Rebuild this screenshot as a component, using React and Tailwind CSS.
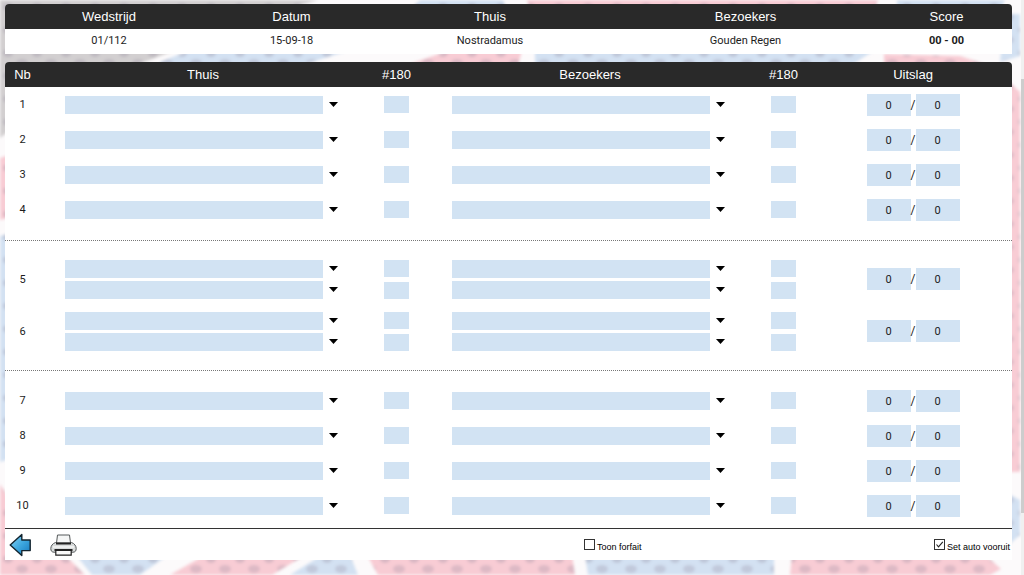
import React, { useState } from "react";

const GRAY = "#d2cfd0";
const PINK = "#f8ccd4";
const BLUE = "#d3e1f2";

const PATCHES = [
  { fill: GRAY, d: "M0 0H318L268 14L150 60L60 92L0 138Z" },
  { fill: PINK, d: "M0 158L40 145V210L0 220Z" },
  { fill: BLUE, d: "M0 236L40 226V450L0 462Z" },
  { fill: PINK, d: "M0 484L10 500L85 575H0Z" },
  { fill: BLUE, d: "M160 62L190 50H350L300 66H160Z" },
  { fill: BLUE, d: "M420 0H503L507 10H410Z" },
  { fill: PINK, d: "M410 64L450 50H522L518 66Z" },
  { fill: PINK, d: "M527 0H878L874 10H530Z" },
  { fill: BLUE, d: "M535 50H875L850 66H535Z" },
  { fill: BLUE, d: "M897 0H1005L1000 10H897Z" },
  { fill: PINK, d: "M884 54L960 56L990 66H884Z" },
  { fill: BLUE, d: "M1005 14H1020V56L1000 62Z" },
  { fill: PINK, d: "M1005 78L1020 92V472H1005Z" },
  { fill: BLUE, d: "M1005 492L1020 500V535L1005 548Z" },
  { fill: BLUE, d: "M76 555H168L140 575H92Z" },
  { fill: PINK, d: "M205 555H305L272 575H170Z" },
  { fill: BLUE, d: "M322 555H350L358 575H290Z" },
  { fill: PINK, d: "M367 555H572L575 575H378Z" },
  { fill: BLUE, d: "M585 555H774V575H588Z" },
  { fill: PINK, d: "M792 555H985L1001 569L990 575H790Z" },
];

function Backdrop() {
  return (
    <svg
      className="pointer-events-none absolute inset-0 h-full w-full"
      viewBox="0 0 1024 575"
      preserveAspectRatio="none"
      aria-hidden="true"
    >
      <defs>
        <pattern id="dimples" width="29" height="23" patternUnits="userSpaceOnUse">
          <ellipse cx="8" cy="7" rx="5" ry="4" fill="#8d8498" opacity="0.3" />
          <ellipse cx="22" cy="17" rx="6" ry="4" fill="#8d8498" opacity="0.26" />
        </pattern>
        <filter id="soft">
          <feGaussianBlur stdDeviation="1.6" />
        </filter>
      </defs>
      <rect width="1024" height="575" fill="#fcfafb" />
      <g filter="url(#soft)">
        {PATCHES.map((p, i) => (
          <g key={i}>
            <path d={p.d} fill={p.fill} />
            <path d={p.d} fill="url(#dimples)" />
          </g>
        ))}
      </g>
    </svg>
  );
}

function BackIcon() {
  return (
    <svg width="23" height="24" viewBox="0 0 23 24" aria-hidden="true">
      <defs>
        <linearGradient id="arrowFill" x1="0" y1="0" x2="1" y2="1">
          <stop offset="0" stopColor="#8fd6f6" />
          <stop offset="0.5" stopColor="#3fa9e0" />
          <stop offset="1" stopColor="#1478bd" />
        </linearGradient>
      </defs>
      <path
        d="M1.2 12L12.8 1.4V7H21.2V17.6H12.8V22.6Z"
        fill="url(#arrowFill)"
        stroke="#12242f"
        strokeWidth="1.4"
        strokeLinejoin="round"
      />
    </svg>
  );
}

function PrinterIcon() {
  return (
    <svg width="27" height="22" viewBox="0 0 27 22" aria-hidden="true">
      <path
        d="M5.5 8.5H21.5C24.5 9.5 26.2 12 26.2 14.5C26.2 17 25 18.2 23 18.2H4C2 18.2 0.8 17 0.8 14.5C0.8 12 2.5 9.5 5.5 8.5Z"
        fill="#d9dcdc"
        stroke="#55595a"
      />
      <path d="M7.5 1H19.5L20.5 9H6.5Z" fill="#f5f6f6" stroke="#55595a" />
      <path d="M6 9.5H21" stroke="#222" strokeWidth="2" />
      <path d="M3 13H24" stroke="#f7f7f7" strokeWidth="1.4" />
      <path d="M4.5 16H22.5" stroke="#222" strokeWidth="2" />
      <path d="M5.8 16.5H21.2V21.2H5.8Z" fill="#fafafa" stroke="#222" strokeWidth="1.2" />
    </svg>
  );
}

function PlayerSelect({ label }) {
  return (
    <div className="flex items-center gap-1.5 pr-7 pl-[25px]">
      <select
        aria-label={label}
        className="block h-[18px] min-w-0 flex-1 appearance-none bg-[#d2e3f3] px-1 text-[11px] outline-none"
      >
        <option value=""></option>
      </select>
      <svg className="shrink-0" width="9" height="5" viewBox="0 0 9 5" aria-hidden="true">
        <path d="M0 0H9L4.5 5Z" fill="#000" />
      </svg>
    </div>
  );
}

function PlayerCell({ label, count }) {
  return (
    <td className="p-0">
      <div className="flex flex-col gap-[3px]">
        {Array.from({ length: count }, (_, i) => (
          <PlayerSelect key={i} label={`${label} ${i + 1}`} />
        ))}
      </div>
    </td>
  );
}

function MaxCell({ label, count }) {
  return (
    <td className="p-0">
      <div className="flex flex-col items-center gap-[5px]">
        {Array.from({ length: count }, (_, i) => (
          <input
            key={i}
            type="text"
            aria-label={`${label} ${i + 1}`}
            className="block h-[17px] w-[25px] bg-[#d2e3f3] text-center text-[11px] outline-none"
          />
        ))}
      </div>
    </td>
  );
}

function ScoreInput({ label }) {
  return (
    <input
      type="text"
      defaultValue="0"
      aria-label={label}
      className="block h-[22px] w-11 bg-[#d2e3f3] pt-px text-center text-[11px] text-[#222] outline-none"
    />
  );
}

function MatchRow({ nb, double }) {
  const count = double ? 2 : 1;
  return (
    <tr className={double ? "h-[52px]" : "h-[35px]"}>
      <th scope="row" className="p-0 pt-0.5 text-center font-normal">{nb}</th>
      <PlayerCell label={`Thuis ${nb}`} count={count} />
      <MaxCell label={`#180 thuis ${nb}`} count={count} />
      <PlayerCell label={`Bezoekers ${nb}`} count={count} />
      <MaxCell label={`#180 bezoekers ${nb}`} count={count} />
      <td className="p-0">
        <div className="flex items-center justify-center">
          <ScoreInput label={`Uitslag thuis ${nb}`} />
          <span className="w-[5px] text-center text-xs">/</span>
          <ScoreInput label={`Uitslag bezoekers ${nb}`} />
        </div>
      </td>
    </tr>
  );
}

function Divider() {
  return (
    <>
      <tr>
        <td colSpan={6} className="h-[14px] border-b border-dotted border-[#777] p-0"></td>
      </tr>
      <tr>
        <td colSpan={6} className="h-3 p-0"></td>
      </tr>
    </>
  );
}

const headCell = "bg-[#292929] p-0 text-[13px] font-normal text-white first:rounded-tl last:rounded-tr";

export default function App() {
  const [forfait, setForfait] = useState(false);
  const [auto, setAuto] = useState(true);
  return (
    <div className="relative flex min-h-screen font-['Roboto','Liberation_Sans',sans-serif] text-[11px] text-[#1c1c1c]">
      <Backdrop />
      <main className="relative min-w-0 flex-1 pt-1 pr-[9px] pb-[15px] pl-[5px]">
        <table className="w-full table-fixed border-separate border-spacing-0 rounded-t bg-white text-center">
          <colgroup>
            <col className="w-[208px]" />
            <col className="w-[157px]" />
            <col className="w-[240px]" />
            <col className="w-[271px]" />
            <col className="w-[131px]" />
          </colgroup>
          <thead className="font-['Liberation_Sans',Arial,sans-serif]">
            <tr className="h-[25px]">
              <th className={headCell}>Wedstrijd</th>
              <th className={headCell}>Datum</th>
              <th className={headCell}>Thuis</th>
              <th className={headCell}>Bezoekers</th>
              <th className={headCell}>Score</th>
            </tr>
          </thead>
          <tbody>
            <tr className="h-[25px]">
              <td className="p-0">01/112</td>
              <td className="p-0">15-09-18</td>
              <td className="p-0">Nostradamus</td>
              <td className="p-0">Gouden Regen</td>
              <td className="p-0 font-bold">00 - 00</td>
            </tr>
          </tbody>
        </table>

        <section className="mt-2 rounded-t bg-white">
          <table className="w-full table-fixed border-separate border-spacing-0">
            <colgroup>
              <col className="w-[35px]" />
              <col />
              <col className="w-[61px]" />
              <col />
              <col className="w-[61px]" />
              <col className="w-[198px]" />
            </colgroup>
            <thead className="font-['Liberation_Sans',Arial,sans-serif]">
              <tr className="h-[25px]">
                <th className={headCell}>Nb</th>
                <th className={headCell}>Thuis</th>
                <th className={headCell}>#180</th>
                <th className={headCell}>Bezoekers</th>
                <th className={headCell}>#180</th>
                <th className={headCell}>Uitslag</th>
              </tr>
            </thead>
            <tbody>
              {[1, 2, 3, 4].map((nb) => (
                <MatchRow key={nb} nb={nb} />
              ))}
              <Divider />
              {[5, 6].map((nb) => (
                <MatchRow key={nb} nb={nb} double />
              ))}
              <Divider />
              {[7, 8, 9, 10].map((nb) => (
                <MatchRow key={nb} nb={nb} />
              ))}
            </tbody>
          </table>

          <footer className="mt-[5px] flex h-8 items-center border-t border-[#333] font-['Liberation_Sans',Arial,sans-serif] text-[9px] text-black">
            <div className="flex w-[57.5%] items-center gap-[18px] pl-1">
              <button type="button" aria-label="Terug" className="block">
                <BackIcon />
              </button>
              <button type="button" aria-label="Afdrukken" className="block">
                <PrinterIcon />
              </button>
            </div>
            <Check label="Toon forfait" checked={forfait} onChange={setForfait} />
            <div className="ml-auto pr-0.5">
              <Check label="Set auto vooruit" checked={auto} onChange={setAuto} />
            </div>
          </footer>
        </section>
      </main>
      <div className="relative flex w-[3px] flex-col bg-[#f0f0f0]" aria-hidden="true">
        <div className="h-[79px]"></div>
        <div className="h-[434px] bg-[#cdcdcd]"></div>
      </div>
    </div>
  );
}

function Check({ label, checked, onChange }) {
  return (
    <label className="flex items-baseline gap-0.5 pt-1">
      <span className="grid">
        <input
          type="checkbox"
          checked={checked}
          onChange={(e) => onChange(e.target.checked)}
          className="col-start-1 row-start-1 size-[11px] appearance-none border border-[#333] bg-white"
        />
        {checked && (
          <svg className="pointer-events-none col-start-1 row-start-1" width="11" height="11" viewBox="0 0 11 11" aria-hidden="true">
            <path d="M2.5 5.5L4.5 7.8L8.8 2.8" fill="none" stroke="#222" strokeWidth="1.1" />
          </svg>
        )}
      </span>
      {label}
    </label>
  );
}
